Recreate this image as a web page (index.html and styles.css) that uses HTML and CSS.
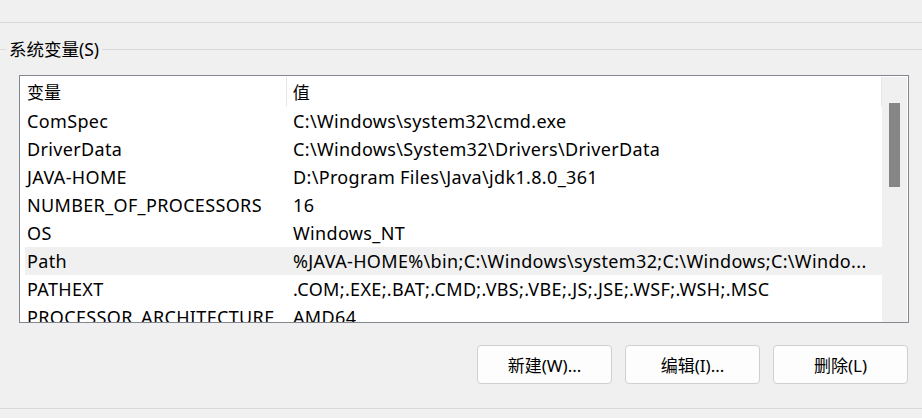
FILE: index.html
```html
<!DOCTYPE html>
<html lang="zh">
<head>
<meta charset="utf-8">
<link rel="stylesheet" href="styles.css">
</head>
<body>
<div class="topline"></div>
<div class="group">
  <div class="legend"><span class="legend-text">系统变量(S)</span></div>
  <div class="listbox">
    <div class="content">
      <div class="header">
        <div class="hcell c1">变量</div>
        <div class="hcell c2">值</div>
      </div>
      <div class="row"><div class="cell c1">ComSpec</div><div class="cell c2">C:\Windows\system32\cmd.exe</div></div>
      <div class="row"><div class="cell c1">DriverData</div><div class="cell c2">C:\Windows\System32\Drivers\DriverData</div></div>
      <div class="row"><div class="cell c1">JAVA-HOME</div><div class="cell c2">D:\Program Files\Java\jdk1.8.0_361</div></div>
      <div class="row"><div class="cell c1">NUMBER_OF_PROCESSORS</div><div class="cell c2">16</div></div>
      <div class="row"><div class="cell c1">OS</div><div class="cell c2">Windows_NT</div></div>
      <div class="row sel"><div class="cell c1">Path</div><div class="cell c2">%JAVA-HOME%\bin;C:\Windows\system32;C:\Windows;C:\Windo...</div></div>
      <div class="row"><div class="cell c1">PATHEXT</div><div class="cell c2">.COM;.EXE;.BAT;.CMD;.VBS;.VBE;.JS;.JSE;.WSF;.WSH;.MSC</div></div>
      <div class="row"><div class="cell c1">PROCESSOR_ARCHITECTURE</div><div class="cell c2">AMD64</div></div>
    </div>
    <div class="scrollbar"><div class="thumb"></div></div>
  </div>
  <div class="buttons">
    <button class="btn">新建(W)...</button>
    <button class="btn">编辑(I)...</button>
    <button class="btn">删除(L)</button>
  </div>
</div>
<div class="bottomline"></div>
</body>
</html>
```
FILE: styles.css
```css
html, body {
  margin: 0;
  padding: 0;
  background: #f0f0f0;
  width: 922px;
  height: 418px;
  overflow: hidden;
  font-family: "Noto Sans", "Noto Sans CJK SC", sans-serif;
  font-size: 17px;
  color: #000;
}
.topline {
  height: 22px;
  border-bottom: 1px solid #d9d9d9;
}
.group {
  display: flex;
  flex-direction: column;
}
.legend {
  margin-top: 14px;
  height: 24px;
  position: relative;
  display: flex;
  align-items: center;
}
.legend::before {
  content: "";
  position: absolute;
  left: 0;
  right: 0;
  top: 12px;
  border-top: 1px solid #d9d9d9;
}
.legend-text {
  position: relative;
  background: #f0f0f0;
  margin-left: 6px;
  padding: 0 3px;
  line-height: 24px;
  font-size: 17.5px;
}
.listbox {
  margin-top: 14px;
  margin-left: 19px;
  width: 890px;
  height: 248px;
  border: 1px solid #838790;
  box-sizing: border-box;
  background: #fff;
  display: flex;
  overflow: hidden;
  font-size: 18px;
  letter-spacing: 0.35px;
}
.content {
  width: 862px;
  overflow: hidden;
}
.header {
  display: flex;
  height: 31px;
  align-items: stretch;
}
.hcell {
  display: flex;
  align-items: center;
  box-sizing: border-box;
  border-right: 1px solid #e5e5e5;
  margin: 1px 0 1px 0;
  font-size: 17px;
  letter-spacing: 0;
}
.header .c1 { width: 267px; padding-left: 7px; }
.header .c2 { width: 596px; padding-left: 6px; }
.row {
  display: flex;
  height: 28px;
  align-items: center;
  margin-left: 5px;
  white-space: nowrap;
}
.row.sel { background: #f0f0f0; }
.cell { overflow: hidden; }
.row .c1 { width: 264px; padding-left: 2px; }
.row .c2 { padding-left: 2px; }
.scrollbar {
  width: 25px;
  margin: 1px 1px 0 0;
  background: #f0f0f0;
  display: flex;
  justify-content: center;
}
.thumb {
  margin-top: 26px;
  width: 11px;
  height: 84px;
  background: #868686;
}
.buttons {
  display: flex;
  justify-content: flex-end;
  gap: 13px;
  margin-top: 22px;
  padding-right: 14px;
}
.btn {
  width: 135px;
  height: 39px;
  border: 1px solid #d0d0d0;
  border-radius: 4px;
  background: #fdfdfd;
  font-family: "Noto Sans", "Noto Sans CJK SC", sans-serif;
  font-size: 17px;
  color: #000;
  padding: 0;
}
.bottomline {
  margin-top: 24px;
  border-top: 1px solid #d9d9d9;
}
```
